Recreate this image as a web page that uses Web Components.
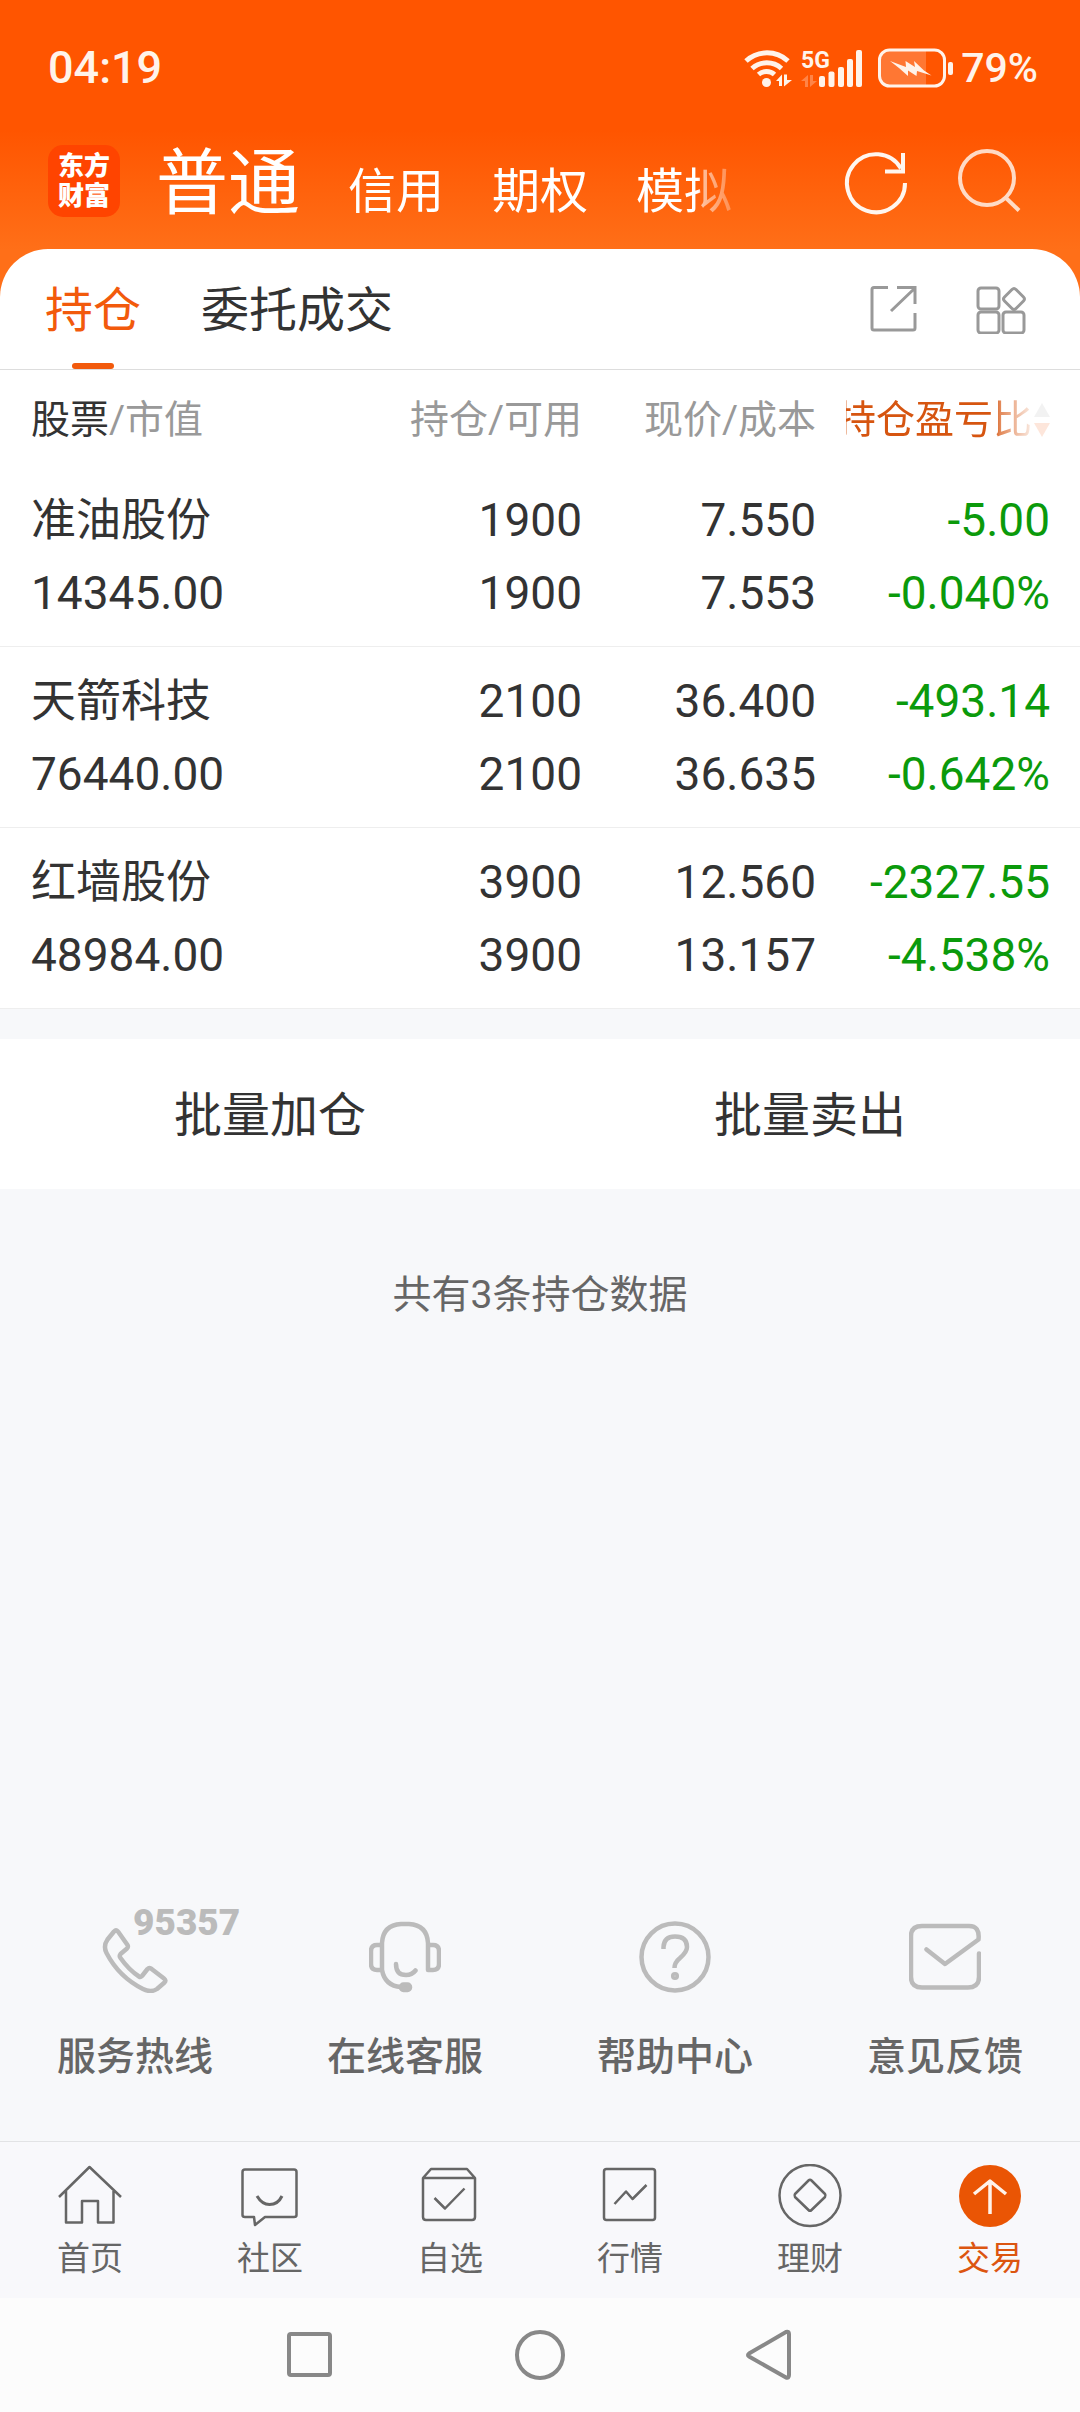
<!DOCTYPE html>
<html lang="zh-CN">
<head>
<meta charset="utf-8">
<meta name="viewport" content="width=device-width, initial-scale=1">
<title>持仓</title>
<style>
  body {
    margin: 0;
    color: #333;
    background: #f7f8fa;
    font-family: Roboto, "Noto Sans CJK SC", sans-serif;
  }
</style>
</head>
<body>
<trade-page>
  <status-bar slot="top" time="04:19" battery="79%"></status-bar>
  <account-bar slot="top"></account-bar>

  <section-tabs></section-tabs>
  <holdings-table></holdings-table>
  <batch-actions>
    <span slot="buy">批量加仓</span>
    <span slot="sell">批量卖出</span>
  </batch-actions>
  <list-summary>共有3条持仓数据</list-summary>

  <service-links slot="bottom">
    <service-link badge="95357">
      <svg slot="icon" viewBox="0 0 72 72"><path d="M15 10.500Q17 8.500 19 10.500L28.500 24Q29.500 26 28 27.500L21.500 33Q20 35 21.500 37Q30 49 40 55.500Q41.500 56.500 43 55L48.500 48Q50 46.500 52 47.500L65 57.500Q67.500 59.500 65.500 61.500L58 68Q52 72 44 68Q20 56 7.500 32Q4 25 8.500 18.500Z"/></svg>
      服务热线
    </service-link>
    <service-link>
      <svg slot="icon" viewBox="0 0 72 72"><path d="M13 49V22Q14 4 32 3H40Q58 4 59 22V49H64Q70 49 70 43V30Q70 24 64 24H59M13 24H8Q2 24 2 30V43Q2 49 8 49H13Q16 65 32 66M27 43Q27 54 37 54Q43 54 46.500 49.500"/><rect x="32" y="63.500" width="9" height="5.500" rx="2.500" fill="#bbb"/></svg>
      在线客服
    </service-link>
    <service-link>
      <svg slot="icon" viewBox="0 0 72 72"><circle cx="36" cy="36" r="33.500"/><path stroke-linecap="butt" d="M24.500 28V26Q25 15.500 36 15.500Q48 15.500 48 26Q48 31 41 37Q35.500 41.500 35.500 47"/><circle cx="36" cy="55" r="1.800"/></svg>
      帮助中心
    </service-link>
    <service-link>
      <svg slot="icon" viewBox="0 0 72 72"><path d="M17.500 28.500L36 43L69.500 18.500Q71 5 60 5H13Q2 5 2 15V56Q2 66.500 13 66.500H59Q70 66.500 70 56V32.500"/></svg>
      意见反馈
    </service-link>
  </service-links>

  <tab-bar slot="bottom">
    <tab-item>
      <svg slot="icon" viewBox="0 0 64 64"><path d="M1 33L31.500 3L63 33M8 27V58.500H24V37H40V58.500H55.500V27"/></svg>
      首页
    </tab-item>
    <tab-item>
      <svg slot="icon" viewBox="0 0 64 64"><path d="M7 5.500H56Q58.500 5.500 58.500 8V51Q58.500 53 56 53H27L17 61L16 53H7Q4.500 53 4.500 51V8Q4.500 5.500 7 5.500Z"/><path stroke-width="3" d="M19 32Q24 40.500 31.500 40.500Q40 40.500 44 32"/></svg>
      社区
    </tab-item>
    <tab-item>
      <svg slot="icon" viewBox="0 0 64 64"><path d="M5 14L13 5H49L57 14V53Q57 56 54 56H8Q5 56 5 53ZM5 14H57M16.500 34L27 44.500L46.500 24.500"/></svg>
      自选
    </tab-item>
    <tab-item>
      <svg slot="icon" viewBox="0 0 64 64"><rect x="6" y="5" width="51" height="51" rx="2.500"/><path d="M16.500 40L28 27.500L34.500 35L48.500 21"/></svg>
      行情
    </tab-item>
    <tab-item>
      <svg slot="icon" viewBox="0 0 64 64"><circle cx="32" cy="31.500" r="30.500"/><path d="M30.500 16.500Q32 15 33.500 16.500L47 30Q48 31.500 47 33L33.500 46Q32 47.500 30.500 46L17 33Q16 31.500 17 30Z"/></svg>
      理财
    </tab-item>
    <tab-item active>
      <svg slot="icon" viewBox="0 0 64 64"><circle cx="32" cy="32" r="31" fill="#ea5504" stroke="none"/><path stroke="#fff3ea" stroke-width="3.500" d="M32 50V17M16 30L32 17L48 30"/></svg>
      交易
    </tab-item>
  </tab-bar>
  <system-nav slot="bottom"></system-nav>
</trade-page>

<script>
// attach an open shadow root holding the given markup
function shadow(host, html) {
  const template = document.createElement('template');
  template.innerHTML = html;
  host.attachShadow({ mode: 'open' }).appendChild(template.content.cloneNode(true));
}

const buttonReset = /*css*/`
  button {
    margin: 0;
    padding: 0;
    border: 0;
    background: none;
    color: inherit;
    font: inherit;
    white-space: nowrap;
  }
`;

class TradePage extends HTMLElement {
  constructor() {
    super();
    shadow(this, /*html*/`
<style>
  :host {
    display: flex;
    flex-direction: column;
    min-height: 100vh;
  }
  header {
    padding-bottom: 48px;
    color: #fff;
    background: linear-gradient(#ff5500 130px, #ff6f18 250px);
  }
  main {
    flex: 1;
    margin-top: -48px;
    border-radius: 48px 48px 0 0;
    overflow: hidden;
  }
</style>
<header><slot name="top"></slot></header>
<main><slot></slot></main>
<footer><slot name="bottom"></slot></footer>
`);
  }
}

class StatusBar extends HTMLElement {
  constructor() {
    super();
    shadow(this, /*html*/`
<style>
  :host {
    display: flex;
    align-items: center;
    justify-content: space-between;
    height: 132px;
    padding: 2px 42px 0 48px;
    color: #fff3ea;
    font-size: 45px;
    font-weight: 500;
    line-height: 54px;
  }
  .icons {
    display: flex;
    align-items: center;
    gap: 8px;
    font-size: 41px;
  }
  .battery { margin-left: 6px; }
  svg { display: block; fill: currentColor; }
</style>
<time></time>
<div class="icons">
  <svg width="50" height="40" viewBox="0 0 50 40" aria-label="Wi-Fi">
    <g fill="none" stroke="currentColor" stroke-width="5">
      <path d="M3 13A31 31 0 0 1 45 13"/>
      <path d="M9 20.500A22 22 0 0 1 38.500 20.500"/>
      <path d="M15.500 26.500A12 12 0 0 1 31.500 26.500"/>
    </g>
    <circle cx="23.500" cy="34.500" r="4.500"/>
    <path d="M33 33L39 26.500V38H36V33ZM41 26.500H44V32H49L41 38.500Z"/>
  </svg>
  <svg width="62" height="40" viewBox="0 0 62 40">
    <text x="0" y="20" font-size="23" font-weight="700">5G</text>
    <path opacity=".3" d="M0 33L7 27V39H4V33ZM9 27H12V33H16L9 39Z"/>
    <rect x="18" y="28" width="6" height="11" rx="2"/>
    <rect x="27.500" y="23.500" width="6" height="15.500" rx="2"/>
    <rect x="37" y="19" width="6" height="20" rx="2"/>
    <rect x="46" y="11" width="6" height="28" rx="2"/>
    <rect x="55" y="2" width="6" height="37" rx="2"/>
  </svg>
  <svg class="battery" width="76" height="40" viewBox="0 0 76 40">
    <path opacity=".22" d="M12 3H49V38H12Q3 38 3 30V11Q3 3 12 3Z"/>
    <rect x="2.500" y="2" width="65" height="36" rx="10" fill="none" stroke="currentColor" stroke-width="3"/>
    <rect x="71" y="14" width="5" height="13" rx="2"/>
    <path d="M13 13L29 19L28.500 13L38 19L37 13L47 22.500L54.500 27.500L40 23L39.500 28L31 22.500L31 28L22 20Z"/>
  </svg>
  <span></span>
</div>
`);
  }

  connectedCallback() {
    this.shadowRoot.querySelector('time').textContent = this.getAttribute('time');
    this.shadowRoot.querySelector('span').textContent = this.getAttribute('battery');
  }
}

class AccountBar extends HTMLElement {
  constructor() {
    super();
    shadow(this, /*html*/`
<style>
  ${buttonReset}
  :host {
    display: flex;
    align-items: center;
    gap: 36px;
    height: 94px;
    padding: 0 59px 21px 48px;
  }
  .logo {
    display: flex;
    flex-direction: column;
    justify-content: center;
    width: 72px;
    height: 72px;
    border-radius: 15px;
    background: #ff4400;
    color: #fff;
    font-size: 26px;
    font-weight: 900;
    line-height: 30px;
    text-align: center;
    text-decoration: none;
  }
  nav {
    flex: 1;
    display: flex;
    align-items: baseline;
    gap: 48px;
    min-width: 0;
    padding-top: 14px;
    overflow: hidden;
    font-size: 48px;
    line-height: 94px;
    -webkit-mask-image: linear-gradient(to right, #000 542px, rgba(0, 0, 0, .6) 546px, transparent 600px);
    mask-image: linear-gradient(to right, #000 542px, rgba(0, 0, 0, .6) 546px, transparent 600px);
  }
  .current { font-size: 72px; }
  .tools { display: flex; gap: 49px; }
  svg {
    display: block;
    width: 64px;
    height: 64px;
    overflow: visible;
    fill: none;
    stroke: #fff6ef;
    stroke-width: 4;
  }
  .search svg { opacity: .82; }
</style>
<a class="logo" href="#"><span>东方</span><span>财富</span></a>
<nav>
  <button class="current">普通</button>
  <button>信用</button>
  <button>期权</button>
  <button>模拟</button>
</nav>
<div class="tools">
  <button aria-label="刷新">
    <svg viewBox="0 0 64 64"><path d="M61 34A29 29 0 1 1 57 19.500M59 4V22.500H41"/></svg>
  </button>
  <button class="search" aria-label="搜索">
    <svg viewBox="0 0 64 64"><circle cx="30" cy="29" r="27"/><path d="M48.500 48.500L62 61.500"/></svg>
  </button>
</div>
`);
  }
}

class SectionTabs extends HTMLElement {
  constructor() {
    super();
    shadow(this, /*html*/`
<style>
  ${buttonReset}
  :host {
    display: flex;
    justify-content: space-between;
    align-items: stretch;
    height: 120px;
    padding: 0 54px 0 45px;
    border-bottom: 1px solid #ddd;
    background: #fff;
    font-size: 48px;
    line-height: 60px;
  }
  nav, .tools { display: flex; gap: 60px; }
  button { position: relative; }
  nav button { padding-top: 4px; }
  .current { color: #f25a0c; }
  .current::after {
    content: "";
    position: absolute;
    left: calc(50% - 21px);
    bottom: 0;
    width: 42px;
    height: 6px;
    border-radius: 3px;
    background: currentColor;
  }
  .tools { gap: 58px; }
  svg {
    display: block;
    width: 50px;
    height: 50px;
    fill: none;
    stroke: #999;
    stroke-width: 3;
  }
</style>
<nav>
  <button class="current">持仓</button>
  <button>委托成交</button>
</nav>
<div class="tools">
  <button aria-label="分享">
    <svg viewBox="0 0 50 50"><path d="M20 3.500H6Q4 3.500 4 5.500V44Q4 46 6 46H45Q47 46 47 44V29M29 3.500H47V20M46 5L23 27"/></svg>
  </button>
  <button aria-label="更多功能">
    <svg viewBox="0 0 50 50"><rect x="2" y="4" width="21" height="21" rx="3"/><rect x="2" y="28" width="21" height="21" rx="3"/><rect x="27" y="28" width="21" height="21" rx="3"/><path d="M36 5.500Q38 3.500 40 5.500L47.500 13Q49.500 15 47.500 17L40 24.500Q38 26.500 36 24.500L28.500 17Q26.500 15 28.500 13Z"/></svg>
  </button>
</div>
`);
  }
}

const holdings = [
  { name: '准油股份', value: '14345.00', held: '1900', usable: '1900', price: '7.550', cost: '7.553', profit: '-5.00', ratio: '-0.040%' },
  { name: '天箭科技', value: '76440.00', held: '2100', usable: '2100', price: '36.400', cost: '36.635', profit: '-493.14', ratio: '-0.642%' },
  { name: '红墙股份', value: '48984.00', held: '3900', usable: '3900', price: '12.560', cost: '13.157', profit: '-2327.55', ratio: '-4.538%' },
];

class HoldingsTable extends HTMLElement {
  constructor() {
    super();
    shadow(this, /*html*/`
<style>
  ${buttonReset}
  :host { display: block; background: #fff; }
  table {
    width: 100%;
    table-layout: fixed;
    border-spacing: 0;
  }
  .stock { width: auto; }
  .num { width: 234px; }
  .profit { width: 264px; }
  th, td {
    padding: 0;
    text-align: right;
    white-space: nowrap;
  }
  th {
    height: 93px;
    padding-top: 3px;
    color: #999;
    font-size: 39px;
    font-weight: 400;
    line-height: 48px;
  }
  th b { color: #333; font-weight: 400; }
  th:first-child, td:first-child { padding-left: 31px; text-align: left; }
  th:last-child { padding-left: 30px; }
  th:last-child, td:last-child { padding-right: 30px; }
  td {
    padding-top: 18px;
    padding-bottom: 16px;
    border-bottom: 1px solid #eee;
    font-size: 46px;
    line-height: 73px;
  }
  td span { display: block; }
  td:first-child span:first-child { font-size: 45px; }
  td:last-child { color: #0b9a0b; }
  .sort {
    display: flex;
    justify-content: flex-end;
    align-items: center;
    gap: 2px;
    width: 100%;
    overflow: hidden;
    color: #d65510;
    -webkit-mask-image: linear-gradient(to left, rgba(0, 0, 0, .15) 20px, rgba(0, 0, 0, .7) 50px, #000 56px);
    mask-image: linear-gradient(to left, rgba(0, 0, 0, .15) 20px, rgba(0, 0, 0, .7) 50px, #000 56px);
  }
  .sort span, .sort svg { flex: none; }
</style>
<table>
  <colgroup><col class="stock"><col class="num"><col class="num"><col class="profit"></colgroup>
  <thead>
    <tr>
      <th><b>股票</b>/市值</th>
      <th>持仓/可用</th>
      <th>现价/成本</th>
      <th><button class="sort"><span>持仓盈亏比</span><svg width="16" height="34" viewBox="0 0 16 34"><path fill="#aaa" d="M8 0L16 14H0Z"/><path fill="#f25a0c" d="M0 20H16L8 34Z"/></svg></button></th>
    </tr>
  </thead>
  <tbody></tbody>
</table>
`);
  }

  connectedCallback() {
    this.render();
  }

  render() {
    const cell = (a, b) => `<td><span>${a}</span><span>${b}</span></td>`;
    this.shadowRoot.querySelector('tbody').innerHTML = holdings.map(h => `
      <tr>
        ${cell(h.name, h.value)}
        ${cell(h.held, h.usable)}
        ${cell(h.price, h.cost)}
        ${cell(h.profit, h.ratio)}
      </tr>
    `).join('');
  }
}

class BatchActions extends HTMLElement {
  constructor() {
    super();
    shadow(this, /*html*/`
<style>
  ${buttonReset}
  :host {
    display: grid;
    grid-template-columns: 1fr 1fr;
    margin-top: 30px;
    background: #fff;
    font-size: 48px;
    line-height: 60px;
  }
  button { height: 150px; padding-top: 4px; }
  button:first-child { border-right: 1px solid #e8e8e8; }
</style>
<button><slot name="buy"></slot></button>
<button><slot name="sell"></slot></button>
`);
  }
}

class ListSummary extends HTMLElement {
  constructor() {
    super();
    shadow(this, /*html*/`
<style>
  :host {
    display: block;
    padding: 82px 30px;
    color: #666;
    font-size: 39px;
    line-height: 48px;
    text-align: center;
  }
</style>
<slot></slot>
`);
  }
}

class ServiceLinks extends HTMLElement {
  constructor() {
    super();
    shadow(this, /*html*/`
<style>
  :host {
    display: grid;
    grid-template-columns: repeat(4, 1fr);
    padding-bottom: 60px;
  }
</style>
<slot></slot>
`);
  }
}

class ServiceLink extends HTMLElement {
  constructor() {
    super();
    shadow(this, /*html*/`
<style>
  :host { display: block; }
  a {
    display: flex;
    flex-direction: column;
    align-items: center;
    gap: 40px;
    color: #666;
    font-size: 39px;
    font-weight: 500;
    line-height: 48px;
    text-decoration: none;
  }
  .icon { position: relative; color: #bbb; }
  .badge {
    position: absolute;
    left: 34px;
    top: -18px;
    font-size: 37px;
    font-weight: 900;
    line-height: 40px;
  }
  ::slotted(svg) {
    display: block;
    width: 72px;
    height: 72px;
    fill: none;
    stroke: #bbb;
    stroke-width: 4.500;
    stroke-linecap: round;
    stroke-linejoin: round;
  }
</style>
<a href="#">
  <span class="icon"><slot name="icon"></slot><span class="badge"></span></span>
  <span><slot></slot></span>
</a>
`);
  }

  connectedCallback() {
    this.shadowRoot.querySelector('.badge').textContent = this.getAttribute('badge') || '';
  }
}

class TabBar extends HTMLElement {
  constructor() {
    super();
    shadow(this, /*html*/`
<style>
  :host {
    display: grid;
    grid-template-columns: repeat(6, 1fr);
    padding: 22px 0 19px;
    border-top: 1px solid #e2e3e5;
    background: #f8f8fb;
  }
</style>
<slot></slot>
`);
  }
}

class TabItem extends HTMLElement {
  constructor() {
    super();
    shadow(this, /*html*/`
<style>
  :host { display: block; color: #666; }
  :host([active]) { color: #dc5510; }
  a {
    display: flex;
    flex-direction: column;
    align-items: center;
    gap: 11px;
    color: inherit;
    font-size: 33px;
    line-height: 40px;
    text-decoration: none;
  }
  ::slotted(svg) {
    display: block;
    width: 64px;
    height: 64px;
    fill: none;
    stroke: #666;
    stroke-width: 2.500;
    stroke-linejoin: round;
  }
</style>
<a href="#">
  <slot name="icon"></slot>
  <span><slot></slot></span>
</a>
`);
  }
}

class SystemNav extends HTMLElement {
  constructor() {
    super();
    shadow(this, /*html*/`
<style>
  ${buttonReset}
  :host {
    display: flex;
    justify-content: center;
    align-items: center;
    gap: 178px;
    height: 114px;
    background: #fcfcfc;
  }
  svg {
    display: block;
    width: 52px;
    height: 52px;
    fill: none;
    stroke: #888;
    stroke-width: 4;
    stroke-linejoin: round;
  }
</style>
<button aria-label="最近任务"><svg viewBox="0 0 52 52"><rect x="5" y="5" width="41" height="41" rx="2"/></svg></button>
<button aria-label="主屏幕"><svg viewBox="0 0 52 52"><circle cx="26" cy="26" r="23"/></svg></button>
<button aria-label="返回"><svg viewBox="0 0 52 52"><path d="M5 24.500L42 3Q45 2 45 5V46Q45 49.500 42 48.500L5 27.500Q3 26 5 24.500Z"/></svg></button>
`);
  }
}

customElements.define('trade-page', TradePage);
customElements.define('status-bar', StatusBar);
customElements.define('account-bar', AccountBar);
customElements.define('section-tabs', SectionTabs);
customElements.define('holdings-table', HoldingsTable);
customElements.define('batch-actions', BatchActions);
customElements.define('list-summary', ListSummary);
customElements.define('service-links', ServiceLinks);
customElements.define('service-link', ServiceLink);
customElements.define('tab-bar', TabBar);
customElements.define('tab-item', TabItem);
customElements.define('system-nav', SystemNav);
</script>
</body>
</html>
